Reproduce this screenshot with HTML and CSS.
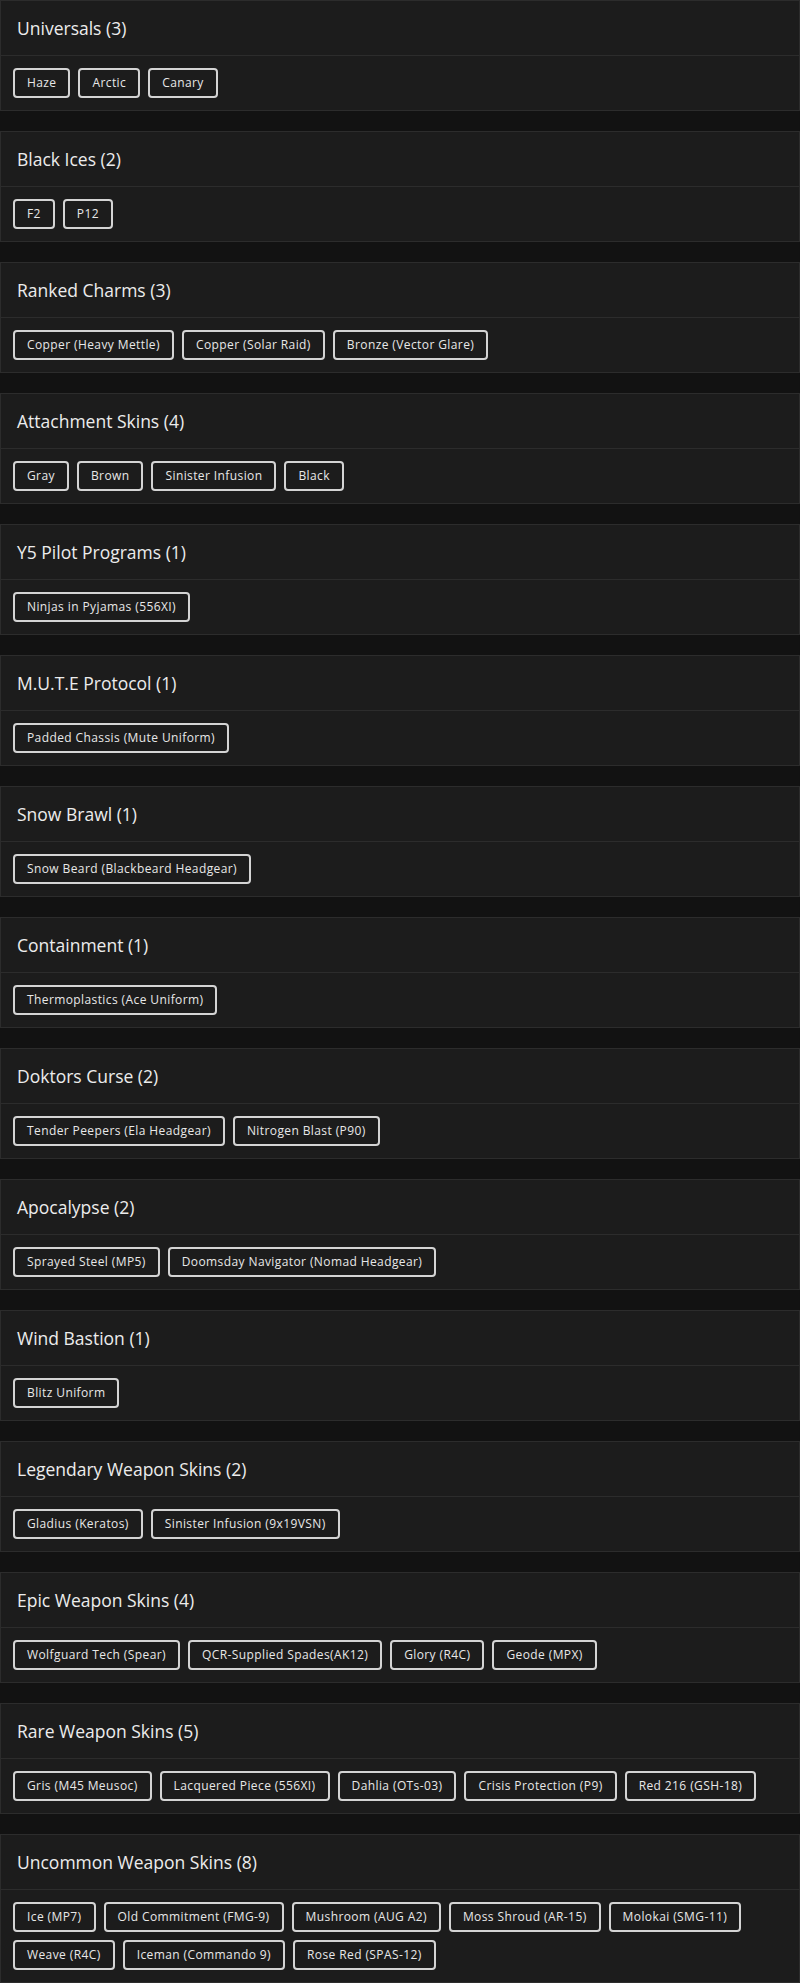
FILE: index.html
```html
<!DOCTYPE html>
<html lang="en">
<head>
  <meta charset="UTF-8" />
  <meta name="viewport" content="width=device-width, initial-scale=1.0"/>
  <title>Collection</title>
  <link rel="stylesheet" href="styles.css">
</head>
<body>
  <div class="list">
    <section class="card">
      <h2 class="card-title">Universals (3)</h2>
      <div class="tags"><span class="tag">Haze</span><span class="tag">Arctic</span><span class="tag">Canary</span></div>
    </section>
    <section class="card">
      <h2 class="card-title">Black Ices (2)</h2>
      <div class="tags"><span class="tag">F2</span><span class="tag">P12</span></div>
    </section>
    <section class="card">
      <h2 class="card-title">Ranked Charms (3)</h2>
      <div class="tags"><span class="tag">Copper (Heavy Mettle)</span><span class="tag">Copper (Solar Raid)</span><span class="tag">Bronze (Vector Glare)</span></div>
    </section>
    <section class="card">
      <h2 class="card-title">Attachment Skins (4)</h2>
      <div class="tags"><span class="tag">Gray</span><span class="tag">Brown</span><span class="tag">Sinister Infusion</span><span class="tag">Black</span></div>
    </section>
    <section class="card">
      <h2 class="card-title">Y5 Pilot Programs (1)</h2>
      <div class="tags"><span class="tag">Ninjas in Pyjamas (556XI)</span></div>
    </section>
    <section class="card">
      <h2 class="card-title">M.U.T.E Protocol (1)</h2>
      <div class="tags"><span class="tag">Padded Chassis (Mute Uniform)</span></div>
    </section>
    <section class="card">
      <h2 class="card-title">Snow Brawl (1)</h2>
      <div class="tags"><span class="tag">Snow Beard (Blackbeard Headgear)</span></div>
    </section>
    <section class="card">
      <h2 class="card-title">Containment (1)</h2>
      <div class="tags"><span class="tag">Thermoplastics (Ace Uniform)</span></div>
    </section>
    <section class="card">
      <h2 class="card-title">Doktors Curse (2)</h2>
      <div class="tags"><span class="tag">Tender Peepers (Ela Headgear)</span><span class="tag">Nitrogen Blast (P90)</span></div>
    </section>
    <section class="card">
      <h2 class="card-title">Apocalypse (2)</h2>
      <div class="tags"><span class="tag">Sprayed Steel (MP5)</span><span class="tag">Doomsday Navigator (Nomad Headgear)</span></div>
    </section>
    <section class="card">
      <h2 class="card-title">Wind Bastion (1)</h2>
      <div class="tags"><span class="tag">Blitz Uniform</span></div>
    </section>
    <section class="card">
      <h2 class="card-title">Legendary Weapon Skins (2)</h2>
      <div class="tags"><span class="tag">Gladius (Keratos)</span><span class="tag">Sinister Infusion (9x19VSN)</span></div>
    </section>
    <section class="card">
      <h2 class="card-title">Epic Weapon Skins (4)</h2>
      <div class="tags"><span class="tag">Wolfguard Tech (Spear)</span><span class="tag">QCR-Supplied Spades(AK12)</span><span class="tag">Glory (R4C)</span><span class="tag">Geode (MPX)</span></div>
    </section>
    <section class="card">
      <h2 class="card-title">Rare Weapon Skins (5)</h2>
      <div class="tags"><span class="tag">Gris (M45 Meusoc)</span><span class="tag">Lacquered Piece (556XI)</span><span class="tag">Dahlia (OTs-03)</span><span class="tag">Crisis Protection (P9)</span><span class="tag">Red 216 (GSH-18)</span></div>
    </section>
    <section class="card">
      <h2 class="card-title">Uncommon Weapon Skins (8)</h2>
      <div class="tags"><span class="tag">Ice (MP7)</span><span class="tag">Old Commitment (FMG-9)</span><span class="tag">Mushroom (AUG A2)</span><span class="tag">Moss Shroud (AR-15)</span><span class="tag">Molokai (SMG-11)</span><span class="tag">Weave (R4C)</span><span class="tag">Iceman (Commando 9)</span><span class="tag">Rose Red (SPAS-12)</span></div>
    </section>
  </div>
</body>
</html>
```

FILE: styles.css
```css
* { box-sizing: border-box; margin: 0; padding: 0; }
body {
  font-family: "Open Sans", Arial, sans-serif;
  background: #121212;
  color: #e6e6e6;
}

.list {
  display: flex;
  flex-direction: column;
  gap: 20px;
}

.card {
  background: #1c1c1c;
  border: 1px solid #2c2c2c;
}

.card-title {
  font-size: 17.5px;
  font-weight: 500;
  line-height: 22px;
  padding: 16px 16px;
  border-bottom: 1px solid #2c2c2c;
  color: #ececec;
}

.tags {
  display: flex;
  flex-wrap: wrap;
  gap: 8px;
  padding: 12px;
}

.tag {
  display: inline-block;
  font-size: 12px;
  letter-spacing: 0.4px;
  line-height: 14px;
  padding: 6px 12px;
  border: 2px solid #d4d4d4;
  border-radius: 4px;
  color: #e8e8e8;
}
```
